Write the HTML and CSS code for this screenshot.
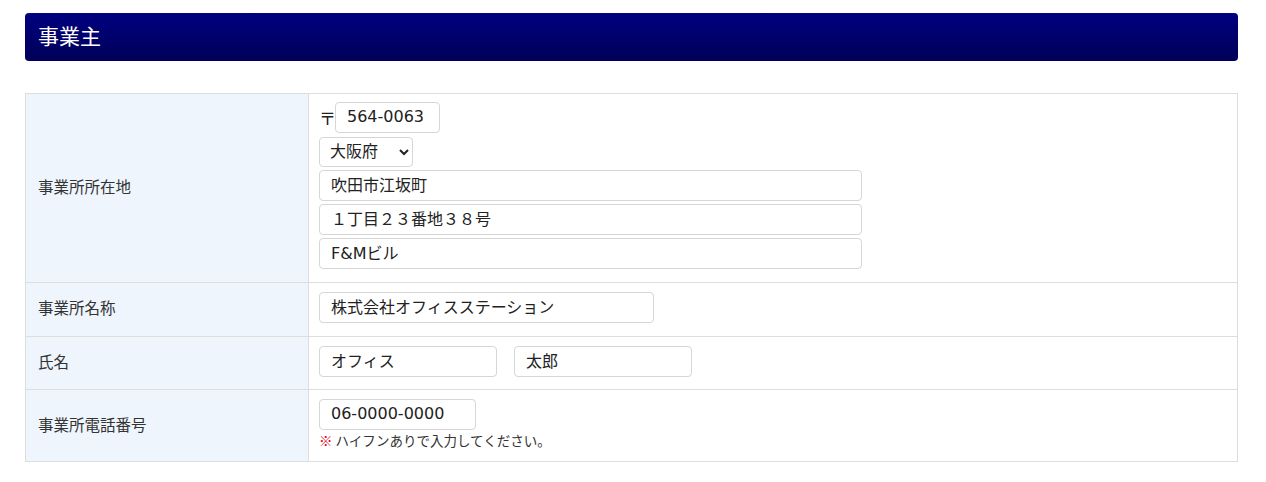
FILE: index.html
```html
<!DOCTYPE html>
<html lang="ja">
<head>
    <meta charset="UTF-8">
    <meta name="viewport" content="width=device-width, initial-scale=1.0">
    <title>事業主</title>
    <link rel="stylesheet" href="styles.css">
</head>
<body>
    <div class="page">
        <h2 class="section-title">事業主</h2>

        <table class="form-table">
            <tr>
                <th>事業所所在地</th>
                <td class="address-cell">
                    <div class="zip-line">
                        <span class="zip-mark">〒</span>
                        <input type="text" class="input zip" value="564-0063">
                    </div>
                    <div class="line">
                        <select class="input pref">
                            <option selected>大阪府</option>
                        </select>
                    </div>
                    <div class="line"><input type="text" class="input address" value="吹田市江坂町"></div>
                    <div class="line"><input type="text" class="input address" value="１丁目２３番地３８号"></div>
                    <div class="line"><input type="text" class="input address" value="F&amp;Mビル"></div>
                </td>
            </tr>
            <tr>
                <th>事業所名称</th>
                <td><input type="text" class="input company" value="株式会社オフィスステーション"></td>
            </tr>
            <tr>
                <th>氏名</th>
                <td>
                    <div class="name-line">
                        <input type="text" class="input name" value="オフィス">
                        <input type="text" class="input name" value="太郎">
                    </div>
                </td>
            </tr>
            <tr>
                <th>事業所電話番号</th>
                <td class="tel-cell">
                    <input type="text" class="input tel" value="06-0000-0000">
                    <p class="note"><span class="mark">※</span> ハイフンありで入力してください。</p>
                </td>
            </tr>
        </table>
    </div>
</body>
</html>
```

FILE: styles.css
```css
* {
    box-sizing: border-box;
}

body {
    margin: 0;
    font-family: "Noto Sans CJK JP", "Noto Sans", sans-serif;
    color: #333;
    background: #fff;
}

.page {
    padding: 13px 28px 0 25px;
}

.section-title {
    margin: 0;
    height: 48px;
    line-height: 44px;
    padding-left: 13px;
    font-size: 21px;
    font-weight: normal;
    color: #fff;
    border-radius: 4px;
    background: linear-gradient(#000080, #000058);
}

.form-table {
    width: 100%;
    margin-top: 32px;
    border-collapse: collapse;
}

.form-table th,
.form-table td {
    border: 1px solid #ddd;
}

.form-table th {
    width: 283px;
    padding: 0 12px 4px;
    text-align: left;
    font-size: 15.5px;
    font-weight: normal;
    background-color: #eef5fd;
}

.form-table td {
    padding: 9px 10px 12.5px;
    vertical-align: top;
}

.form-table td.address-cell {
    padding-top: 8px;
    padding-bottom: 13px;
}

.form-table td.tel-cell {
    padding-bottom: 12px;
}

.input {
    display: block;
    height: 31px;
    padding: 0 11px 3px;
    font-family: "DejaVu Sans", "Noto Sans CJK JP", sans-serif;
    font-size: 16px;
    color: #222;
    background: #fff;
    border: 1px solid #d6d6d6;
    border-radius: 4px;
}

.zip-line {
    display: flex;
    align-items: center;
}

.zip-mark {
    width: 16px;
    font-size: 17px;
    color: #222;
}

.zip {
    width: 105px;
}

.line {
    margin-top: 3px;
}

.zip-line + .line {
    margin-top: 4px;
}

.pref {
    width: 94px;
    height: 30px;
    padding: 0 6px 2px;
    background-color: #fff;
}

.address {
    width: 543px;
}

.company {
    width: 335px;
}

.name-line {
    display: flex;
    gap: 17px;
}

.name {
    width: 178px;
}

.tel {
    width: 157px;
}

.note {
    margin: 1px 0 0;
    font-size: 13.5px;
    line-height: 18px;
    color: #333;
}

.note .mark {
    color: #e60012;
    font-weight: bold;
}
```
